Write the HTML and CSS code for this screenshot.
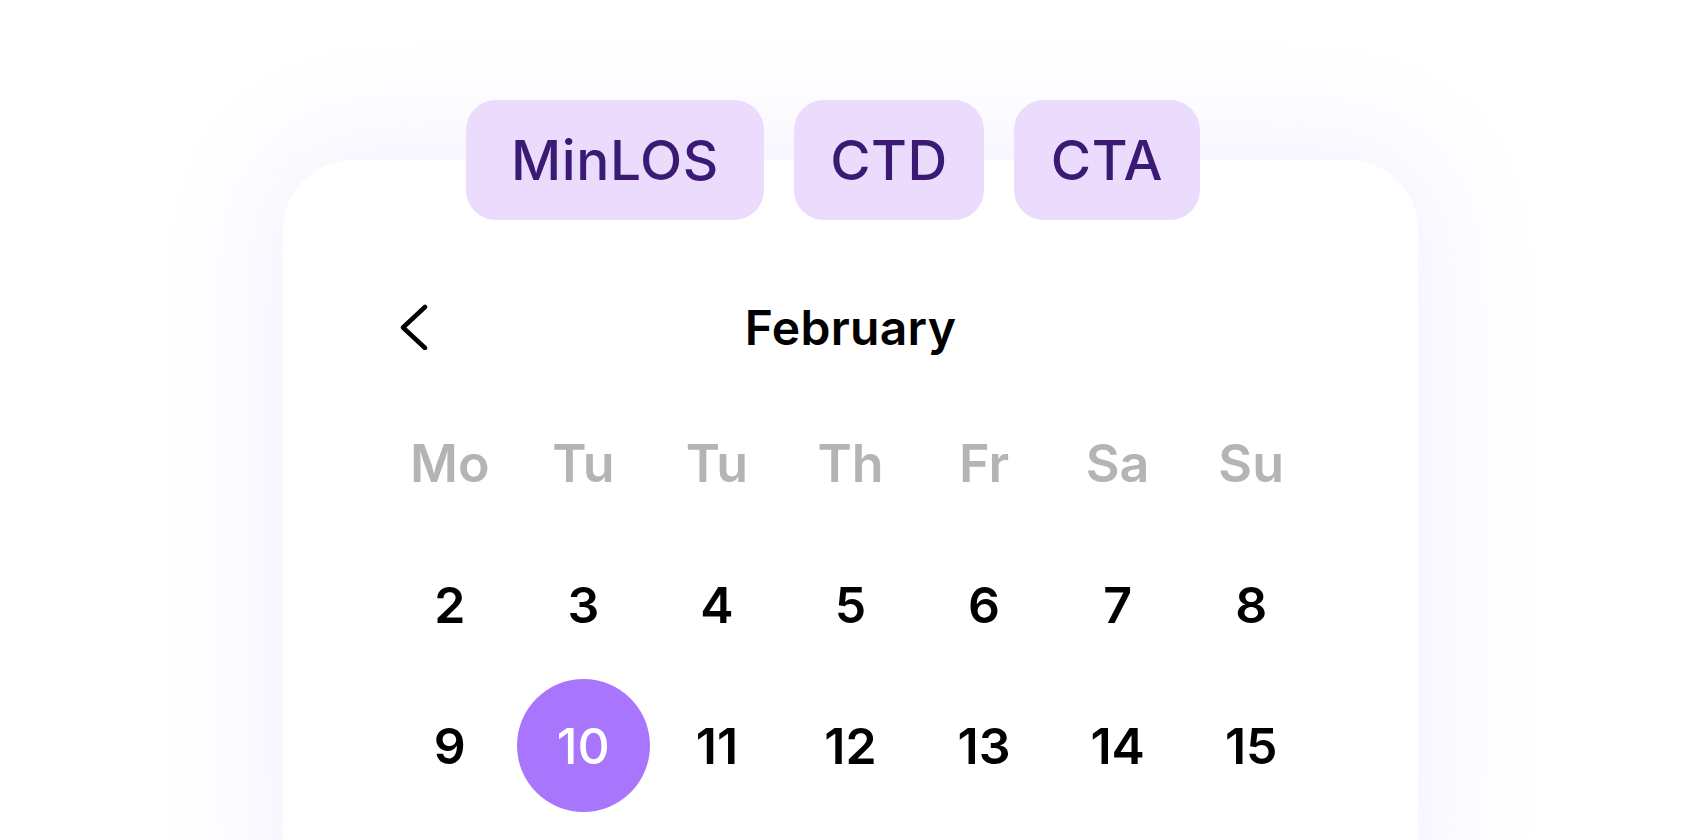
FILE: index.html
```html
<!DOCTYPE html>
<html lang="en">
<head>
<meta charset="utf-8">
<title>Calendar</title>
<link rel="stylesheet" href="styles.css">
</head>
<body>
<main class="stage">
  <div class="chips">
    <span class="chip chip-minlos">MinLOS</span>
    <span class="chip chip-ctd">CTD</span>
    <span class="chip chip-cta">CTA</span>
  </div>
  <section class="card">
    <header class="month-head">
      <button class="nav-btn" aria-label="Previous month">
        <svg width="30" height="46" viewBox="0 0 30 46" aria-hidden="true">
          <path d="M26 3 L4 23.5 L26 44" fill="none" stroke="#000" stroke-width="4.5" stroke-linecap="round" stroke-linejoin="round"/>
        </svg>
      </button>
      <h2 class="month-title">February</h2>
      <span></span>
    </header>
    <div class="grid">
      <span class="wd">Mo</span><span class="wd">Tu</span><span class="wd">Tu</span><span class="wd">Th</span><span class="wd">Fr</span><span class="wd">Sa</span><span class="wd">Su</span>
      <span class="day">2</span><span class="day">3</span><span class="day">4</span><span class="day">5</span><span class="day">6</span><span class="day">7</span><span class="day">8</span>
      <span class="day">9</span><span class="day"><span class="today">10</span></span><span class="day">11</span><span class="day">12</span><span class="day">13</span><span class="day">14</span><span class="day">15</span>
    </div>
  </section>
</main>
</body>
</html>
```
FILE: styles.css
```css
html, body {
  margin: 0;
  padding: 0;
  background: #ffffff;
  height: 840px;
  overflow: hidden;
  font-family: Inter, "Noto Sans", sans-serif;
}

.stage {
  padding: 100px 0 0 283px;
  width: 1135px;
}

.chips {
  position: relative;
  z-index: 1;
  display: flex;
  gap: 30px;
  padding-left: 183px;
  height: 120px;
}

.chip {
  display: flex;
  align-items: center;
  justify-content: center;
  height: 120px;
  border-radius: 30px;
  background: #ebdcfe;
  color: #3b1a73;
  font-size: 55px;
  font-weight: 500;
  letter-spacing: 0.6px;
}

.chip-minlos { width: 298px; }
.chip-ctd { width: 190px; }
.chip-cta { width: 186px; }

.card {
  margin-top: -60px;
  height: 760px;
  box-sizing: border-box;
  padding: 127px 100px 0;
  background: #ffffff;
  border-radius: 70px;
  box-shadow: 0 0 110px 30px rgba(130, 90, 240, 0.075);
}

.month-head {
  display: grid;
  grid-template-columns: 1fr auto 1fr;
  align-items: center;
  height: 80px;
}

.nav-btn {
  justify-self: start;
  margin-left: 16px;
  padding: 0;
  border: 0;
  background: none;
  display: flex;
}

.month-title {
  margin: 0;
  font-size: 48px;
  font-weight: 600;
  color: #000;
  letter-spacing: 0.3px;
}

.grid {
  margin-top: 26px;
  display: grid;
  grid-template-columns: repeat(7, 1fr);
  grid-auto-rows: 141px;
}

.wd, .day {
  display: flex;
  align-items: center;
  justify-content: center;
}

.wd {
  font-size: 52px;
  font-weight: 600;
  color: #b4b4b4;
}

.day {
  font-size: 50px;
  font-weight: 600;
  color: #000;
}

.today {
  width: 133px;
  height: 133px;
  border-radius: 50%;
  background: #a776fd;
  color: #fff;
  font-weight: 500;
  display: flex;
  align-items: center;
  justify-content: center;
}
```
